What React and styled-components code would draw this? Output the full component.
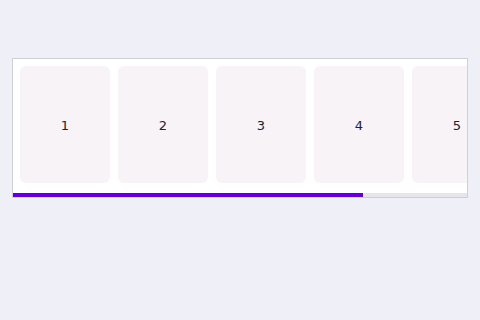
import React from 'react'
import styled, { createGlobalStyle } from 'styled-components'

const Global = createGlobalStyle`
  html, body {
    margin: 0;
    background: #eff0f7;
    font-family: "DejaVu Sans", "Noto Sans", sans-serif;
  }
`

const items = [1, 2, 3, 4, 5]

export default function App() {
  return (
    <>
      <Global />
      <Page>
        <Frame>
          <Track>
            {items.map((n) => (
              <Card key={n}>{n}</Card>
            ))}
          </Track>
          <Progress>
            <Fill style={{ width: '77%' }} />
          </Progress>
        </Frame>
      </Page>
    </>
  )
}

const Page = styled.div`
  padding: 58px 12px 0;
`

const Frame = styled.div`
  background: #fff;
  border: 1px solid #cfcfd6;
  overflow: hidden;
`

const Track = styled.div`
  display: flex;
  gap: 8px;
  padding: 7px 0 10px 7px;
  overflow: hidden;
`

const Card = styled.div`
  flex: 0 0 90px;
  height: 117px;
  padding-top: 1px;
  box-sizing: border-box;
  border-radius: 6px;
  background: #f7f3f6;
  display: flex;
  align-items: center;
  justify-content: center;
  font-size: 13px;
  color: #1e2233;
`

const Progress = styled.div`
  height: 4px;
  background: #e6e6ea;
`

const Fill = styled.div`
  height: 100%;
  background: #6200d4;
`
